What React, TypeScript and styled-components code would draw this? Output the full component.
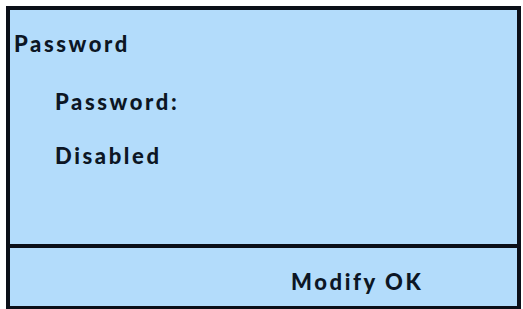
import React from "react";
import styled, { createGlobalStyle } from "styled-components";

const Global = createGlobalStyle`
  html, body { margin: 0; padding: 0; background: #ffffff; }
  body { font-family: Lato, "Open Sans", sans-serif; }
`;

const Page = styled.div`
  padding: 6px 0 0 6px;
  width: 523px;
  height: 309px;
  box-sizing: border-box;
  overflow: hidden;
`;

const Frame = styled.div`
  width: 515px;
  height: 304px;
  box-sizing: border-box;
  border: 4px solid #0b0f18;
  background: #b3dcfb;
  display: flex;
  flex-direction: column;
`;

const Main = styled.div`
  height: 238px;
  box-sizing: border-box;
  padding: 21px 0 0 4px;
  display: flex;
  flex-direction: column;
  border-bottom: 4px solid #0b0f18;
`;

const Line = styled.div<{ $indent?: number; $gap?: number }>`
  font-size: 22px;
  font-weight: 900;
  line-height: 25px;
  letter-spacing: 2.6px;
  color: #0c1624;
  padding-left: ${(p) => p.$indent ?? 0}px;
  margin-top: ${(p) => p.$gap ?? 0}px;
`;

const Footer = styled.div`
  flex: 1;
  display: flex;
  align-items: center;
  padding: 8px 0 0 281px;
`;

export default function App() {
  return (
    <>
      <Global />
      <Page>
        <Frame>
          <Main>
            <Line>Password</Line>
            <Line $indent={41} $gap={33}>Password:</Line>
            <Line $indent={41} $gap={29}>Disabled</Line>
          </Main>
          <Footer>
            <Line>Modify OK</Line>
          </Footer>
        </Frame>
      </Page>
    </>
  );
}
